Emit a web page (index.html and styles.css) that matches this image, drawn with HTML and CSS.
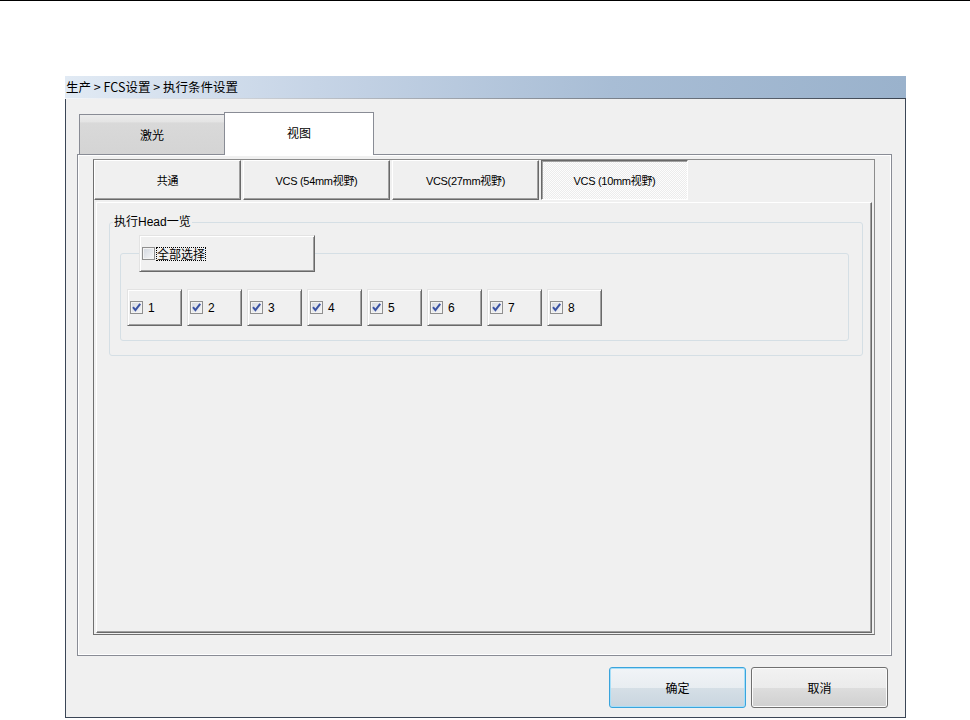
FILE: index.html
```html
<!DOCTYPE html>
<html lang="zh-CN">
<head>
    <meta charset="UTF-8">
    <meta name="viewport" content="width=device-width, initial-scale=1.0">
    <title>执行条件设置</title>

    <link rel="stylesheet" href="styles.css">

</head>
<body>

    <div class="window">

        <div class="title-bar">生产 &gt; FCS设置 &gt; 执行条件设置</div>

        <div class="window-body">

            <div class="tab-strip">
                <div class="tab">激光</div>
                <div class="tab tab-active">视图</div>
            </div>

            <div class="tab-panel">

                <div class="sub-tabs">

                    <div class="sub-strip">
                        <div class="sub-tab">共通</div>
                        <div class="sub-tab">VCS (54mm视野)</div>
                        <div class="sub-tab">VCS(27mm视野)</div>
                        <div class="sub-tab sub-tab-active">VCS (10mm视野)</div>
                    </div>

                    <div class="sub-panel">

                        <fieldset class="group">
                            <legend class="group-title">执行Head一览</legend>

                            <fieldset class="group group-inner">
                                <legend class="check-btn check-all">
                                    <span class="check-box"></span>
                                    <span class="focus-ring">全部选择</span>
                                </legend>

                                <div class="head-row">
                                    <div class="check-btn"><span class="check-box"><svg viewBox="0 0 11 11"><path d="M2 5.2 L4.4 8.2 L9.2 1.8"/></svg></span>1</div>
                                    <div class="check-btn"><span class="check-box"><svg viewBox="0 0 11 11"><path d="M2 5.2 L4.4 8.2 L9.2 1.8"/></svg></span>2</div>
                                    <div class="check-btn"><span class="check-box"><svg viewBox="0 0 11 11"><path d="M2 5.2 L4.4 8.2 L9.2 1.8"/></svg></span>3</div>
                                    <div class="check-btn"><span class="check-box"><svg viewBox="0 0 11 11"><path d="M2 5.2 L4.4 8.2 L9.2 1.8"/></svg></span>4</div>
                                    <div class="check-btn"><span class="check-box"><svg viewBox="0 0 11 11"><path d="M2 5.2 L4.4 8.2 L9.2 1.8"/></svg></span>5</div>
                                    <div class="check-btn"><span class="check-box"><svg viewBox="0 0 11 11"><path d="M2 5.2 L4.4 8.2 L9.2 1.8"/></svg></span>6</div>
                                    <div class="check-btn"><span class="check-box"><svg viewBox="0 0 11 11"><path d="M2 5.2 L4.4 8.2 L9.2 1.8"/></svg></span>7</div>
                                    <div class="check-btn"><span class="check-box"><svg viewBox="0 0 11 11"><path d="M2 5.2 L4.4 8.2 L9.2 1.8"/></svg></span>8</div>
                                </div>
                            </fieldset>
                        </fieldset>

                    </div>

                </div>

            </div>

            <div class="actions">
                <button class="btn btn-default">确定</button>
                <button class="btn">取消</button>
            </div>

        </div>

    </div>

</body>
</html>
```

FILE: styles.css
```css
:root {
    --face: #f0f0f0;
    --shadow: #a0a0a0;
    --dark-shadow: #696969;
    --light: #e3e3e3;
    --tab-border: #898c95;
}

*, *::before, *::after {
    box-sizing: border-box;
}

body {
    margin: 0;
    border-top: 1px solid #000;
    padding: 75px 0 0 65px;
    background-color: #fff;
    font-family: "Noto Sans CJK SC", sans-serif;
    font-size: 12px;
    color: #000;
}

.window {
    width: 841px;
}

.title-bar {
    height: 23px;
    padding-left: 1px;
    line-height: 22px;
    font-size: 12.5px;
    white-space: nowrap;
    background:
        linear-gradient(to right, #f4f7fb, #39424f) bottom / 100% 1px no-repeat,
        linear-gradient(to right, #e1eaf4 0%, #c6d4e6 30%, #a8bdd5 65%, #9ab2cc 100%);
}

.window-body {
    border: 1px solid #3b4656;
    border-top: none;
    background-color: var(--face);
    padding: 13px 13px 9px 11px;
}

/* onglets principaux */
.tab-strip {
    display: flex;
    align-items: flex-end;
    padding-left: 2px;
}

.tab {
    width: 145px;
    height: 40px;
    display: flex;
    justify-content: center;
    align-items: center;
    border: 1px solid var(--tab-border);
    border-bottom: none;
    border-right: none;
    background: linear-gradient(#ececec 0%, #e4e4e4 18%, #d9d9d9 20%, #d4d4d4 100%);
}

.tab-active {
    width: 150px;
    height: 43px;
    margin-bottom: -1px;
    padding-bottom: 4px;
    border-right: 1px solid var(--tab-border);
    background: #fff;
    position: relative;
    z-index: 1;
}

.tab-panel {
    border: 1px solid var(--tab-border);
    box-shadow: inset 1px 1px 0 #fff, inset -1px -1px 0 #fff;
    padding: 4px 16px 20px 15px;
}

/* onglets VCS */
.sub-tabs {
    border: 1px solid #8c8c8c;
    border-left-color: #6f6f6f;
    border-bottom-color: #6f6f6f;
}

.sub-strip {
    display: flex;
    gap: 2px;
    height: 40px;
}

.sub-tab {
    width: 147px;
    display: flex;
    justify-content: center;
    align-items: center;
    border: 1px solid;
    border-color: #fff var(--dark-shadow) var(--dark-shadow) #fff;
    box-shadow: inset -1px -1px 0 var(--shadow);
    font: 11px "Liberation Sans", "Noto Sans CJK SC", sans-serif;
    letter-spacing: -0.3px;
    white-space: nowrap;
}

.sub-tab-active {
    border-color: var(--dark-shadow) #fff #fff var(--dark-shadow);
    box-shadow: inset 1px 1px 0 var(--shadow);
    background: repeating-conic-gradient(#fdfdfd 0 25%, #ececec 0 50%) 0 0 / 2px 2px;
}

.sub-panel {
    height: 431px;
    margin: 2px 2px 1px;
    border: 1px solid;
    border-color: #fff var(--dark-shadow) var(--dark-shadow) #fff;
    box-shadow: inset -1px -1px 0 var(--shadow);
    padding: 12px 8px 0 12px;
}

/* groupes */
.group {
    margin: 0;
    padding: 0;
    min-width: 0;
    border: 1px solid #d5dfe5;
    border-radius: 3px;
}

.group-title {
    margin-left: 3px;
    padding: 0 1px;
    line-height: 14px;
    font-family: "Liberation Sans", "Noto Sans CJK SC", sans-serif;
}

.group-inner {
    margin: 6px 13px 14px 10px;
    padding: 17px 0 14px 6px;
}

.head-row {
    display: flex;
    gap: 5px;
}

.check-btn {
    width: 55px;
    height: 37px;
    display: flex;
    align-items: center;
    gap: 5px;
    padding: 0 0 0 2px;
    border: 1px solid;
    border-color: var(--light) var(--dark-shadow) var(--dark-shadow) var(--light);
    box-shadow: inset 1px 1px 0 #fff, inset -1px -1px 0 var(--shadow);
    background-color: var(--face);
    font: 12px "Liberation Sans", sans-serif;
}

.check-all {
    width: 176px;
    margin-left: 12px;
    gap: 1px;
}

.check-box {
    width: 13px;
    height: 13px;
    flex: none;
    display: flex;
    justify-content: center;
    align-items: center;
    border: 1px solid #8f8f8f;
    background: linear-gradient(135deg, #d2d7df, #f7f7f7);
    box-shadow: inset 0 0 0 1px #f3f3f3;
}

.check-box svg {
    display: block;
    width: 11px;
    height: 11px;
}

.check-box path {
    fill: none;
    stroke: #3a52a3;
    stroke-width: 2;
}

.focus-ring {
    border: 1px dotted #000;
    line-height: 12px;
    font-family: "Noto Sans CJK SC", sans-serif;
}

/* boutons */
.actions {
    display: flex;
    justify-content: flex-end;
    gap: 5px;
    margin-top: 11px;
    padding-right: 4px;
}

.btn {
    width: 137px;
    height: 41px;
    padding: 0;
    border: 1px solid #707070;
    border-radius: 3px;
    background: linear-gradient(#f2f2f2 0%, #ebebeb 50%, #dddddd 51%, #d0d0d0 100%);
    box-shadow: inset 0 0 0 1px #fbfbfb;
    font: 12px "Noto Sans CJK SC", sans-serif;
    color: #000;
}

.btn-default {
    border-color: #3aa4dc;
    background: linear-gradient(#f1f4f7 0%, #e8edf1 50%, #d5dfe6 51%, #c9d5df 100%);
    box-shadow: inset 0 0 0 1px #a6def8;
}
```
